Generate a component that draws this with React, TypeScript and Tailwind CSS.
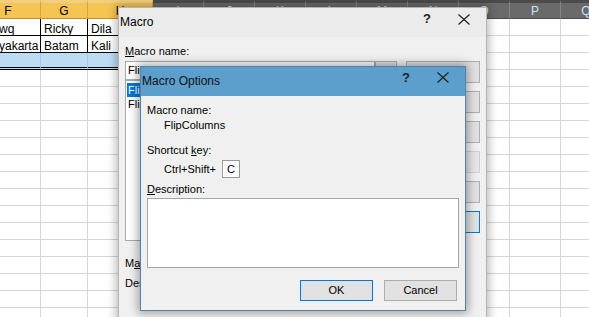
import React from 'react';

type Col = { key: string; w: string; sel: boolean };

const cols: Col[] = [
  { key: 'F', w: 'w-[65px]', sel: true },
  { key: 'G', w: 'w-[47px]', sel: true },
  { key: 'H', w: 'w-[65px]', sel: true },
  { key: 'I', w: 'w-[51px]', sel: false },
  { key: 'J', w: 'w-[51px]', sel: false },
  { key: 'K', w: 'w-[51px]', sel: false },
  { key: 'L', w: 'w-[51px]', sel: false },
  { key: 'M', w: 'w-[51px]', sel: false },
  { key: 'N', w: 'w-[51px]', sel: false },
  { key: 'O', w: 'w-[51px]', sel: false },
  { key: 'P', w: 'w-[51px]', sel: false },
  { key: 'Q', w: 'w-[51px]', sel: false },
];

const cells = [
  ['wq', 'Ricky', 'Dila'],
  ['yakarta', 'Batam', 'Kali'],
];

const macroButtons = ['Run', 'Step Into', 'Edit', 'Create', 'Delete', 'Options...'];

function CloseX() {
  return (
    <svg width="12" height="11" viewBox="0 0 12 11">
      <path d="M0.5 0.5 L11.5 10.5 M11.5 0.5 L0.5 10.5" stroke="#1c1c1c" strokeWidth="1.1" fill="none" />
    </svg>
  );
}

function Sheet() {
  const rows = Array.from({ length: 18 }, (_, i) => i);
  return (
    <div className="ml-[-24px] flex flex-col">
      <div className="flex h-[19px]">
        {cols.map((c) => (
          <div
            key={c.key}
            className={`${c.w} flex-none flex justify-center border-t-[3px] border-r border-b pt-[2px] text-[12px] leading-[13px] ${
              c.sel
                ? 'bg-[#f6c452] border-t-[#f1cf80] border-r-[#dca23a] border-b-[#c98f22] text-black'
                : 'bg-[#6a6a6a] border-t-[#4b4b4b] border-r-[#868686] border-b-[#4a4a4a] text-[#cfe4f7]'
            }`}
          >
            {c.key}
          </div>
        ))}
      </div>
      {rows.map((r) => (
        <div key={r} className="flex h-[17px]">
          {cols.map((c, ci) => {
            const filled = c.sel && r < 2;
            const picked = c.sel && r === 2;
            let cls = 'border-r border-b border-r-[#d6d6d6] border-b-[#d6d6d6] bg-white';
            if (filled) cls = 'border-r border-b border-black bg-white';
            if (picked) cls = 'border-r border-b-[3px] border-double border-r-[#a9c7e2] border-b-black bg-[#bcdcf4]';
            return (
              <div
                key={c.key}
                className={`${c.w} flex-none h-full overflow-hidden whitespace-nowrap text-[12px] leading-[16px] pt-[2px] ${
                  ci === 0 ? 'pl-[23px]' : 'pl-[3px]'
                } ${cls}`}
              >
                {filled ? cells[r][ci] : ''}
              </div>
            );
          })}
        </div>
      ))}
    </div>
  );
}

function MacroDialog() {
  return (
    <div className="absolute left-[118px] top-[7px] w-[369px] h-[330px] border border-[#b4b4b4] bg-[#f0f0f0] shadow-[0_0_9px_2px_rgba(0,0,0,0.28)] text-[11px] leading-[13px] text-black">
      <div className="h-[29px] bg-[#ebebeb] flex items-start pl-[1px]">
        <span className="text-[12px] leading-[29px]">Macro</span>
        <span className="ml-auto mr-[25px] mt-[5px] w-[12px] text-center text-[13px] leading-[11px] font-bold text-[#222]">?</span>
        <span className="mr-[16px] mt-[6px]">
          <CloseX />
        </span>
      </div>
      <div className="flex pl-[6px]">
        <div className="w-[272px] flex flex-col">
          <div className="mt-[8px]">
            <span className="underline">M</span>acro name:
          </div>
          <div className="mt-[3px] flex h-[19px]">
            <div className="flex-1 border border-[#a9a9a9] bg-white pl-[2px] leading-[17px] overflow-hidden">FlipColumns</div>
            <div className="w-[22px] border border-[#adadad] bg-[#e1e1e1] flex items-center justify-center">
              <div className="w-[12px] h-[8px] border border-[#3b7bc8] bg-[#cfe3f7]" />
            </div>
          </div>
          <div className="h-[161px] border border-[#a9a9a9] bg-white pt-[2px] pl-[1px]">
            <div className="h-[14px] leading-[14px] bg-[#0078d7] text-white pl-[1px]">FlipColumns</div>
            <div className="h-[14px] leading-[14px] pl-[1px]">FlipRows</div>
          </div>
          <div className="mt-[16px]">
            M<span className="underline">a</span>cros in:
          </div>
          <div className="mt-[7px]">Description</div>
        </div>
        <div className="ml-[9px] pt-[24px] flex flex-col gap-[8px]">
          {macroButtons.map((b, i) => (
            <div
              key={b}
              className={`w-[74px] h-[22px] flex items-center justify-center border bg-[#e1e1e1] ${
                i === 3 ? 'border-[#cfcfcf] bg-[#e6e6e6] text-[#9a9a9a]' : i === 5 ? 'border-[#0078d7]' : 'border-[#adadad]'
              }`}
            >
              {b}
            </div>
          ))}
        </div>
      </div>
    </div>
  );
}

function OptionsDialog() {
  return (
    <div className="absolute left-[140px] top-[66px] w-[326px] h-[245px] border border-[#4f83ab] bg-[#f0f0f0] shadow-[0_0_9px_2px_rgba(0,0,0,0.35)] text-[11px] leading-[13px] text-black flex flex-col">
      <div className="h-[29px] flex-none bg-[#5c9fcc] flex items-start pl-[1px]">
        <span className="text-[12px] leading-[29px] text-[#111]">Macro Options</span>
        <span className="ml-auto mr-[25px] mt-[5px] w-[12px] text-center text-[13px] leading-[11px] font-bold text-[#222]">?</span>
        <span className="mr-[16px] mt-[5px]">
          <CloseX />
        </span>
      </div>
      <div className="flex flex-col px-[6px] pt-[8px]">
        <div>Macro name:</div>
        <div className="mt-[2px] pl-[17px]">FlipColumns</div>
        <div className="mt-[12px]">
          Shortcut <span className="underline">k</span>ey:
        </div>
        <div className="mt-[3px] pl-[17px] flex items-center h-[18px]">
          <span>Ctrl+Shift+</span>
          <div className="ml-[6px] w-[18px] h-[18px] border border-[#9a9a9a] bg-white pl-[4px] leading-[16px]">C</div>
        </div>
        <div className="mt-[5px]">
          <span className="underline">D</span>escription:
        </div>
        <div className="mt-[2px] h-[70px] border border-[#a3a7ab] bg-white" />
        <div className="mt-[12px] flex justify-end gap-[11px] pr-[2px]">
          <div className="w-[73px] h-[21px] border border-[#0078d7] bg-[#e1e1e1] flex items-center justify-center">OK</div>
          <div className="w-[73px] h-[21px] border border-[#adadad] bg-[#e1e1e1] flex items-center justify-center">Cancel</div>
        </div>
      </div>
    </div>
  );
}

export default function App() {
  return (
    <div className="relative w-[589px] h-[317px] overflow-hidden bg-white font-['Liberation_Sans',Arial,sans-serif]">
      <Sheet />
      <MacroDialog />
      <OptionsDialog />
    </div>
  );
}
